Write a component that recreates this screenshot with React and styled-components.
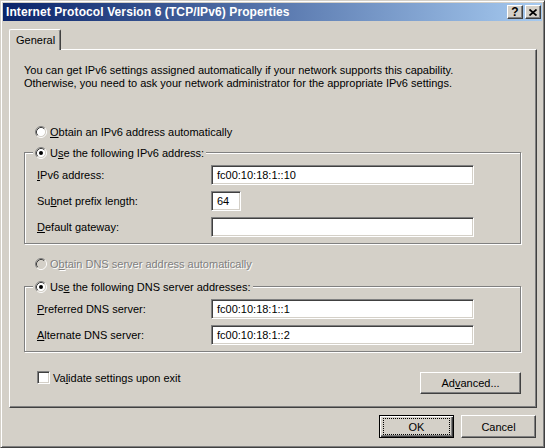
import React from 'react';
import styled, { createGlobalStyle } from 'styled-components';

const GlobalStyle = createGlobalStyle`
  html, body {
    margin: 0;
    padding: 0;
    background: #d4d0c8;
  }
  body {
    font-family: "Liberation Sans", Arial, sans-serif;
    font-size: 11px;
    color: #000;
  }
`;

const Window = styled.div`
  width: 545px;
  height: 448px;
  box-sizing: border-box;
  background: #d4d0c8;
  border: 1px solid;
  border-color: #d4d0c8 #404040 #404040 #d4d0c8;
  box-shadow: inset 1px 1px #fff, inset -1px -1px #808080;
  padding: 2px;
  display: flex;
  flex-direction: column;
`;

const TitleBar = styled.div`
  height: 18px;
  display: flex;
  align-items: center;
  padding: 0 1px 0 3px;
  background: linear-gradient(to right, #0a246a, #a6caf0);
  color: #fff;
  font-weight: bold;
  font-size: 12px;
`;

const TitleText = styled.span`
  flex: 1;
  white-space: nowrap;
  letter-spacing: 0.1px;
`;

const TitleButton = styled.div`
  width: 16px;
  height: 14px;
  box-sizing: border-box;
  margin-left: ${({ gap }) => gap || 0}px;
  background: #d4d0c8;
  border: 1px solid;
  border-color: #fff #404040 #404040 #fff;
  box-shadow: inset -1px -1px #808080;
  display: flex;
  align-items: center;
  justify-content: center;
  color: #000;
  font-weight: bold;
  font-size: 12px;
  line-height: 12px;
`;

const Body = styled.div`
  flex: 1;
  display: flex;
  flex-direction: column;
  padding: 8px 5px 0 6px;
`;

const TabStrip = styled.div`
  display: flex;
  height: 20px;
  position: relative;
  z-index: 1;
`;

const Tab = styled.div`
  width: 52px;
  height: 21px;
  box-sizing: border-box;
  background: #d4d0c8;
  border-top: 1px solid #fff;
  border-left: 1px solid #fff;
  border-right: 1px solid #404040;
  box-shadow: inset -1px 0 #808080;
  border-radius: 2px 2px 0 0;
  padding: 4px 0 0 6px;
  line-height: 13px;
`;

const Panel = styled.div`
  height: 359px;
  box-sizing: border-box;
  border: 1px solid;
  border-color: #fff #404040 #404040 #fff;
  box-shadow: inset -1px -1px #808080;
  padding: 14px 15px 0 14px;
  display: flex;
  flex-direction: column;
`;

const Description = styled.div`
  line-height: 13px;
  white-space: nowrap;
`;

const OptionRow = styled.div`
  display: flex;
  align-items: center;
  height: 13px;
  margin-top: ${({ top }) => top}px;
  margin-left: 11px;
  color: ${({ disabled }) => (disabled ? '#808080' : '#000')};
  text-shadow: ${({ disabled }) => (disabled ? '1px 1px #fff' : 'none')};
`;

const Acc = styled.span`
  text-decoration: underline;
`;

const Group = styled.div`
  position: relative;
  margin-top: ${({ top }) => top}px;
  border: 1px solid #808080;
  box-shadow: inset 1px 1px #fff, 1px 1px #fff;
  padding: 12px 12px 6px 12px;
  display: flex;
  flex-direction: column;
  gap: 6px;
`;

const Legend = styled.div`
  position: absolute;
  top: -7px;
  left: 8px;
  height: 13px;
  padding: 0 2px;
  background: #d4d0c8;
  display: flex;
  align-items: center;
`;

const RadioBox = styled.span`
  width: 12px;
  height: 12px;
  margin-right: 3px;
  display: inline-flex;
`;

const FieldRow = styled.div`
  display: flex;
  align-items: center;
  height: 20px;
`;

const FieldLabel = styled.span`
  width: 174px;
  flex-shrink: 0;
`;

const TextBox = styled.div`
  width: ${({ w }) => w}px;
  height: 20px;
  box-sizing: border-box;
  background: #fff;
  border: 1px solid;
  border-color: #808080 #fff #fff #808080;
  box-shadow: inset 1px 1px #404040, inset -1px -1px #d4d0c8;
  padding: 0 4px 0 5px;
  display: flex;
  align-items: center;
  white-space: nowrap;
`;

const BottomRow = styled.div`
  display: flex;
  align-items: flex-start;
  justify-content: space-between;
  margin-top: 19px;
  padding-left: 13px;
`;

const CheckRow = styled.div`
  display: flex;
  align-items: center;
  height: 13px;
`;

const CheckBox = styled.span`
  width: 13px;
  height: 13px;
  box-sizing: border-box;
  background: #fff;
  border: 1px solid;
  border-color: #808080 #fff #fff #808080;
  box-shadow: inset 1px 1px #404040, inset -1px -1px #d4d0c8;
  margin-right: 3px;
`;

const Button = styled.div`
  position: relative;
  width: ${({ w }) => w}px;
  height: ${({ h }) => h}px;
  box-sizing: border-box;
  margin-top: ${({ top }) => top || 0}px;
  background: #d4d0c8;
  display: flex;
  align-items: center;
  justify-content: center;
  border: 1px solid;
  border-color: ${({ primary }) => (primary ? '#000' : '#fff #404040 #404040 #fff')};
  box-shadow: ${({ primary }) =>
    primary
      ? 'inset 1px 1px #fff, inset -1px -1px #404040, inset -2px -2px #808080'
      : 'inset -1px -1px #808080'};
`;

const FocusRing = styled.span`
  position: absolute;
  top: 2px;
  left: 3px;
  right: 3px;
  bottom: 2px;
  border: 1px dotted #000;
`;

const Footer = styled.div`
  display: flex;
  justify-content: flex-end;
  gap: 7px;
  margin-top: 7px;
  padding-right: 1px;
`;

const Radio = ({ checked, disabled }) => (
  <RadioBox>
    <svg width="12" height="12" viewBox="0 0 12 12">
      <circle cx="6" cy="6" r="4.5" fill={disabled ? '#d4d0c8' : '#fff'} />
      <path d="M2.11 9.89 A5.5 5.5 0 0 1 9.89 2.11" fill="none" stroke="#808080" />
      <path d="M9.89 2.11 A5.5 5.5 0 0 1 2.11 9.89" fill="none" stroke="#fff" />
      <path d="M2.82 9.18 A4.5 4.5 0 0 1 9.18 2.82" fill="none" stroke="#404040" />
      <path d="M9.18 2.82 A4.5 4.5 0 0 1 2.82 9.18" fill="none" stroke="#d4d0c8" />
      {checked && <circle cx="6" cy="6" r="2" fill="#000" />}
    </svg>
  </RadioBox>
);

const Field = ({ label, value, w = 263 }) => (
  <FieldRow>
    <FieldLabel>{label}</FieldLabel>
    <TextBox w={w}>{value}</TextBox>
  </FieldRow>
);

export default function App() {
  return (
    <>
      <GlobalStyle />
      <Window>
        <TitleBar>
          <TitleText>Internet Protocol Version 6 (TCP/IPv6) Properties</TitleText>
          <TitleButton>?</TitleButton>
          <TitleButton gap={2}>
            <svg width="8" height="7" viewBox="0 0 8 7">
              <path d="M0.5 0.5 L7.5 6.5 M7.5 0.5 L0.5 6.5" stroke="#000" strokeWidth="1.7" />
            </svg>
          </TitleButton>
        </TitleBar>
        <Body>
          <TabStrip>
            <Tab>General</Tab>
          </TabStrip>
          <Panel>
            <Description>
              You can get IPv6 settings assigned automatically if your network supports this capability.
              <br />
              Otherwise, you need to ask your network administrator for the appropriate IPv6 settings.
            </Description>

            <OptionRow top={35}>
              <Radio />
              <span><Acc>O</Acc>btain an IPv6 address automatically</span>
            </OptionRow>

            <Group top={14}>
              <Legend>
                <Radio checked />
                <span>U<Acc>s</Acc>e the following IPv6 address:</span>
              </Legend>
              <Field label={<span><Acc>I</Acc>Pv6 address:</span>} value="fc00:10:18:1::10" />
              <Field label={<span>Su<Acc>b</Acc>net prefix length:</span>} value="64" w={30} />
              <Field label={<span><Acc>D</Acc>efault gateway:</span>} value="" />
            </Group>

            <OptionRow top={13} disabled>
              <Radio disabled />
              <span>O<Acc>b</Acc>tain DNS server address automatically</span>
            </OptionRow>

            <Group top={16}>
              <Legend>
                <Radio checked />
                <span>Us<Acc>e</Acc> the following DNS server addresses:</span>
              </Legend>
              <Field label={<span><Acc>P</Acc>referred DNS server:</span>} value="fc00:10:18:1::1" />
              <Field label={<span><Acc>A</Acc>lternate DNS server:</span>} value="fc00:10:18:1::2" />
            </Group>

            <BottomRow>
              <CheckRow>
                <CheckBox />
                <span>Va<Acc>l</Acc>idate settings upon exit</span>
              </CheckRow>
              <Button w={101} h={22} top={1}>
                <span>Ad<Acc>v</Acc>anced...</span>
              </Button>
            </BottomRow>
          </Panel>
          <Footer>
            <Button w={75} h={23} primary>
              <FocusRing />
              OK
            </Button>
            <Button w={75} h={23}>Cancel</Button>
          </Footer>
        </Body>
      </Window>
    </>
  );
}
